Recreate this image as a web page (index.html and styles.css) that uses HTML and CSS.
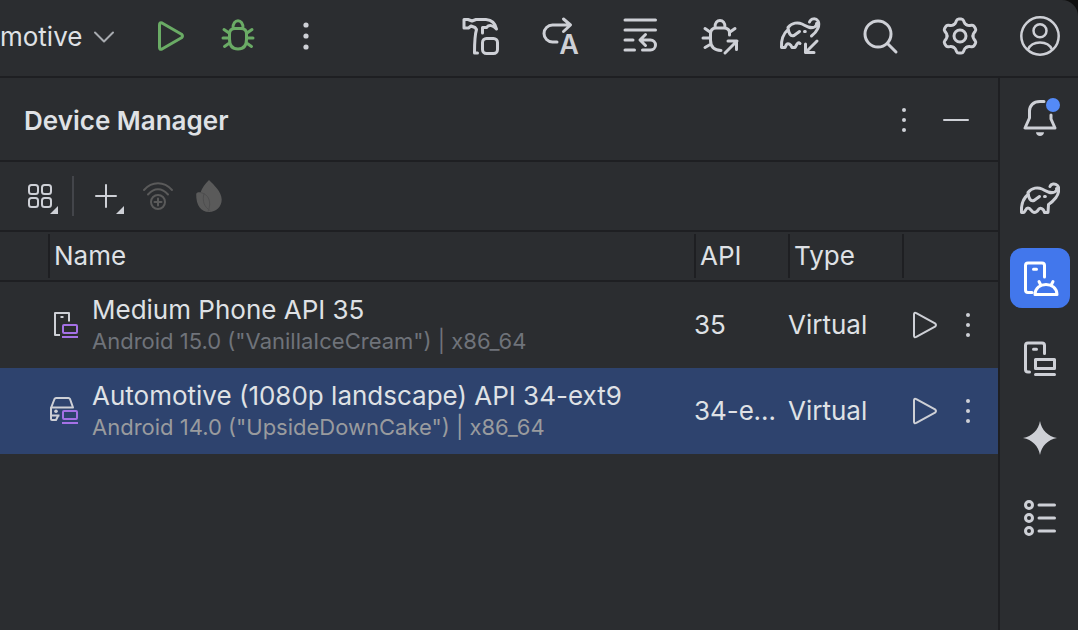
FILE: index.html
```html
<!DOCTYPE html>
<html lang="en">
<head>
<meta charset="utf-8">
<title>Device Manager</title>
<link rel="stylesheet" href="styles.css">
</head>
<body>
<svg class="defs" aria-hidden="true">
  <symbol id="kebab" viewBox="0 0 40 40"><g fill="currentColor"><circle cx="20" cy="10" r="2"/><circle cx="20" cy="20" r="2"/><circle cx="20" cy="30" r="2"/></g></symbol>
  <symbol id="elephant" viewBox="0 0 40 40">
    <path d="M30 8.500C31 5.500 35 5 37.500 7.500C40 10 38.500 16 36 19.500C34 22 31 25 28.500 26.500L28 34.500H24.500C23.500 30 20 29.500 18.500 31.500C17 34 15.500 34.500 14 34.500C11.500 34.500 11 30 8 30C5.500 30 5 34.500 3.500 34.500H1.500C1 27 3 20.500 8 16.500"/>
    <path d="M19.500 18.500L14 22.500C10.500 24 8.500 20 8 14.500C12 9.500 18 9 22 11C27 13.500 30 16 34.500 14C36.500 13 37 11.500 36.500 10.500"/>
    <path d="M24.500 18.500h.8"/>
  </symbol>
  <symbol id="play" viewBox="0 0 28 28"><path d="M4 3.500V24.500Q4 27 6.300 25.900L25 15.600Q27 14 25 12.400L6.300 2.100Q4 1 4 3.500Z"/></symbol>
</svg>
<div class="window">
  <header class="topbar">
    <button class="config" type="button">motive
      <svg class="icon chevron" viewBox="0 0 20 12"><path d="M1 1.500L10 10.500L19 1.500"/></svg>
    </button>
    <div class="group run-group">
      <button class="btn green" type="button" aria-label="Run"><svg class="icon" viewBox="0 0 40 40"><path d="M9.500 9V31.500Q9.500 34 12 33L31.500 21.800Q33.500 20 31.500 18.200L12 7Q9.500 6 9.500 9Z"/></svg></button>
      <button class="btn green" type="button" aria-label="Debug"><svg class="icon" viewBox="0 0 40 40"><path d="M15 12.500C14.500 2 25.500 2 25 12.500M17 12.500H23Q28.500 12.500 28.500 18V23Q28.500 33 20 33T11.500 23V18Q11.500 12.500 17 12.500ZM11 17L6 13.500M10.500 22H5M11.500 27L6.500 30.500M29 17L34 13.500M29.500 22H35M28.500 27L33.500 30.500"/></svg></button>
      <button class="btn" type="button" aria-label="More actions"><svg class="icon" viewBox="0 0 40 40"><g fill="currentColor" stroke="none"><circle cx="20" cy="9" r="2.600"/><circle cx="20" cy="20" r="2.600"/><circle cx="20" cy="31" r="2.600"/></g></svg></button>
    </div>
    <div class="group tools">
      <button class="btn" type="button" aria-label="Build"><svg class="icon" viewBox="0 0 40 40"><path d="M4 3.500H8L12 5L16 3.500H26C32 4 35.500 8 36.500 13C33 9 29 8.500 26.500 11.500H22.500V17M4 3.500V12H8.500L11 10L15 11.500L16.500 13.500C14.500 20 14.500 27 14.500 37H17.500"/><rect x="22.500" y="22.500" width="15" height="15" rx="4"/></svg></button>
      <button class="btn" type="button" aria-label="Apply changes"><svg class="icon" viewBox="0 0 40 40"><path d="M30 9H12.500A8.500 8.500 0 0 0 12.500 26H17M23.500 3L30.500 9L23.500 15.500"/><text class="icon-letter" x="29" y="38" text-anchor="middle">A</text></svg></button>
      <button class="btn" type="button" aria-label="Apply code changes"><svg class="icon" viewBox="0 0 40 40"><path d="M5 4H35.500M5 14H35.500M5 24H13M5 34H14.500M20.500 24H30.500A5 5 0 0 1 30.500 34H22.500M25.500 18.500L20 24L25.500 29.500"/></svg></button>
      <button class="btn" type="button" aria-label="Attach debugger"><svg class="icon" viewBox="0 0 40 40"><path d="M15 11.500C14.500 2 25.500 2 25 11.500M29.500 19V17Q29.500 12 24 12H16Q10.500 12 10.500 18V24Q10.500 34 21 34.500M10 16L5 12.500M10 22H3M11 28L5 31.500M30 16L35 12.500M25 37L37 25M28 25H36.500V33.500"/></svg></button>
      <button class="btn" type="button" aria-label="Sync project"><svg class="icon" viewBox="0 0 40 40"><path d="M29.500 6C31 2 36 2 38 5C40.500 9.500 37 16 31.500 20M20 27.500C18 25.500 16.500 29 15 31.500H12C11 28 8 27 6.500 28.500L5 31.500H1.500C1 24 3 18 8 13.500M19.500 15.500L14 19.500C10.500 21 8.500 17 8 11.500C12 6.500 18 6 22 8C27 10.500 30 13 34.500 11Q37 9.500 36.500 7.500M24.500 15.500h.8M37 25L25.500 36.500M25.500 28V36.500H34"/></svg></button>
      <button class="btn" type="button" aria-label="Search"><svg class="icon" viewBox="0 0 40 40"><circle cx="18" cy="18" r="13"/><path d="M27.500 27.500L36 36"/></svg></button>
      <button class="btn" type="button" aria-label="Settings"><svg class="icon" viewBox="0 0 40 40"><circle cx="20" cy="20" r="6"/><path id="tooth" d="M13.500 8.800Q15.200 7.800 15.800 6.200L16.500 4.500Q17.200 2.900 18.800 2.900H21.200Q22.800 2.900 23.500 4.500L24.200 6.200Q24.800 7.800 26.500 8.800"/><use href="#tooth" transform="rotate(60 20 20)"/><use href="#tooth" transform="rotate(120 20 20)"/><use href="#tooth" transform="rotate(180 20 20)"/><use href="#tooth" transform="rotate(240 20 20)"/><use href="#tooth" transform="rotate(300 20 20)"/></svg></button>
      <button class="btn" type="button" aria-label="Account"><svg class="icon medium" viewBox="0 0 40 40"><circle cx="20" cy="20" r="18.700"/><circle cx="20" cy="14.700" r="6.500"/><path d="M8 33.500C10 29 15 26.500 20 26.500S30 29 32 33.500"/></svg></button>
    </div>
  </header>
  <div class="body">
    <main class="panel">
      <div class="panel-head">
        <h1 class="title">Device Manager</h1>
        <button class="btn" type="button" aria-label="Options"><svg class="icon"><use href="#kebab" stroke="none"/></svg></button>
        <button class="btn" type="button" aria-label="Hide"><svg class="icon thin" viewBox="0 0 40 40"><path d="M8 20H32"/></svg></button>
      </div>
      <div class="panel-tools">
        <button class="btn" type="button" aria-label="Group by"><svg class="icon thin" viewBox="0 0 40 40"><rect x="9" y="9" width="9" height="9" rx="2.500"/><rect x="22" y="9" width="9" height="9" rx="2.500"/><rect x="9" y="22" width="9" height="9" rx="2.500"/><rect x="22" y="22" width="9" height="9" rx="2.500"/><path d="M38 30V38H30Z" fill="currentColor" stroke="none"/></svg></button>
        <span class="divider"></span>
        <button class="btn" type="button" aria-label="Add device"><svg class="icon thin" viewBox="0 0 40 40"><path d="M20 9V31M10 20H30"/><path d="M38 30V38H30Z" fill="currentColor" stroke="none"/></svg></button>
        <button class="btn off" type="button" aria-label="Pair over Wi-Fi" disabled><svg class="icon thin" viewBox="0 0 40 40"><path d="M6 14C14 5 26 5 34 14M10 18.500C16 11.500 24 11.500 30 18.500M20 22.500V29.500M16.500 26H23.500"/><circle cx="20" cy="26" r="7"/></svg></button>
        <button class="btn off" type="button" aria-label="Firebase" disabled><svg class="icon" viewBox="0 0 40 40"><path d="M19 4C24 9 31.700 16 31.700 23.500C31.700 31 26 36 19 36C11 36 6 29.500 6.200 18C6.500 16.500 8.500 16 10.500 16.500C12 12 15 8 19 4Z" fill="currentColor" stroke="none"/><path class="vein" d="M10.500 16.500C19 18 22 26 18 35.500M14 17.500C12 25 14 31 20 34.500"/></svg></button>
      </div>
      <table class="devices">
        <colgroup><col class="c-lead"><col><col class="c-api"><col class="c-type"><col class="c-act"></colgroup>
        <thead>
          <tr><td></td><th scope="col"><span>Name</span></th><th scope="col"><span>API</span></th><th scope="col"><span>Type</span></th><td><span class="blank"></span></td></tr>
        </thead>
        <tbody>
          <tr>
            <td></td>
            <td><div class="device"><svg class="icon device-icon" viewBox="0 0 28 28"><path d="M10 24H5V2H19V10.500M10.500 6H13.500"/><g class="virtual"><rect x="13" y="14" width="14" height="8" rx="1"/><path d="M12 26H28"/></g></svg>
              <div class="info"><div class="name">Medium Phone API 35</div><div class="sub">Android 15.0 ("VanillaIceCream") | x86_64</div></div></div></td>
            <td class="clip">35</td><td>Virtual</td>
            <td><div class="actions"><button class="btn" type="button" aria-label="Start"><svg class="icon play"><use href="#play"/></svg></button><button class="btn" type="button" aria-label="Device actions"><svg class="icon"><use href="#kebab" stroke="none"/></svg></button></div></td>
          </tr>
          <tr class="selected">
            <td></td>
            <td><div class="device"><svg class="icon device-icon" viewBox="0 0 28 28"><path d="M1 11L4.500 2Q5 1 6 1H18.500Q19.500 1 20 2L23 10.500H1V22Q1 23 2 23H6L8 19M1.500 18.500H9.500"/><circle cx="6" cy="14.300" r="1.800" fill="currentColor" stroke="none"/><g class="virtual"><rect x="13" y="14" width="14" height="8" rx="1"/><path d="M12 26H28"/></g></svg>
              <div class="info"><div class="name">Automotive (1080p landscape) API 34-ext9</div><div class="sub">Android 14.0 ("UpsideDownCake") | x86_64</div></div></div></td>
            <td class="clip">34-ext9</td><td>Virtual</td>
            <td><div class="actions"><button class="btn" type="button" aria-label="Start"><svg class="icon play"><use href="#play"/></svg></button><button class="btn" type="button" aria-label="Device actions"><svg class="icon"><use href="#kebab" stroke="none"/></svg></button></div></td>
          </tr>
        </tbody>
      </table>
    </main>
    <nav class="rail">
      <button class="tab" type="button" aria-label="Notifications"><svg class="icon" viewBox="0 0 40 40"><path d="M24 3.500H20C13 3.500 9.500 8 9.500 13V20L5 30H35L31 21V17"/><path d="M16 34.300H24C24 36.500 22 38 20 38S16 36.500 16 34.300Z" fill="currentColor" stroke="none"/><circle class="badge" cx="33" cy="7" r="7"/></svg></button>
      <button class="tab" type="button" aria-label="Gradle"><svg class="icon"><use href="#elephant"/></svg></button>
      <button class="tab active" type="button" aria-label="Device Manager"><svg class="icon" viewBox="0 0 40 40"><path d="M12 34.500H8Q5.500 34.500 5.500 32V7.500Q5.500 5 8 5H22Q24.500 5 24.500 7.500V19M13.500 11.300H16.500M15 36.500C15.500 23 36.500 23 37 36.500ZM19 23.500L21 27.500M33 23.500L31 27.500"/></svg></button>
      <button class="tab" type="button" aria-label="Running Devices"><svg class="icon" viewBox="0 0 40 40"><path d="M9.500 34H8Q5.500 34 5.500 31.500V7.500Q5.500 5 8 5H22Q24.500 5 24.500 7.500V15.500M13.500 11.300H16.500M15.500 36.500H34.500"/><rect x="15.500" y="21.500" width="19" height="9"/></svg></button>
      <button class="tab" type="button" aria-label="Gemini"><svg class="icon" viewBox="0 0 40 40"><path d="M20 3C21.500 12 28 18.500 37 20C28 21.500 21.500 28 20 37C18.500 28 12 21.500 3 20C12 18.500 18.500 12 20 3Z" fill="currentColor" stroke="none"/></svg></button>
      <button class="tab" type="button" aria-label="Logs"><svg class="icon" viewBox="0 0 40 40"><circle cx="9" cy="7" r="3.500"/><circle cx="9" cy="20" r="3.500"/><circle cx="9" cy="33" r="3.500"/><path d="M19 7H34.500M19 20H34.500M19 33H34.500"/></svg></button>
    </nav>
  </div>
</div>
</body>
</html>
```
FILE: styles.css
```css
:root {
  --bg: #2b2d30;
  --line: #1e1f22;
  --text: #dfe1e5;
  --icon: #ced0d6;
}
* { box-sizing: border-box; }
body {
  margin: 0;
  background: #101010;
  color: var(--text);
  font-family: Inter, "Liberation Sans", sans-serif;
  font-size: 26px;
  line-height: 32px;
}
button {
  margin: 0;
  padding: 0;
  border: 0;
  background: none;
  color: var(--icon);
  font: inherit;
}
.defs { position: absolute; width: 0; height: 0; }
.window {
  display: flex;
  flex-direction: column;
  min-height: 100vh;
  background: var(--bg);
  border-top-right-radius: 16px;
}
.icon {
  display: block;
  flex: none;
  width: 40px;
  height: 40px;
  overflow: visible;
  fill: none;
  stroke: currentColor;
  stroke-width: 3px;
  stroke-linejoin: round;
  stroke-linecap: round;
}
.thin { stroke-width: 2px; }
.medium { stroke-width: 2.5px; }
.btn { display: flex; flex: none; }
.green { color: #6aab65; }
.off { color: #5a5a5a; }
.icon-letter {
  font-size: 27px;
  line-height: 27px;
  font-weight: 600;
  fill: currentColor;
  stroke: none;
}

.topbar {
  display: flex;
  align-items: center;
  padding: 0 18px 4px 0;
  height: 78px;
  border-bottom: 2px solid var(--line);
}
.config {
  display: flex;
  align-items: center;
  gap: 12px;
  padding-top: 2px;
  color: var(--text);
}
.chevron {
  width: 20px;
  height: 12px;
  stroke-width: 2px;
  color: #a8abb0;
}
.group { display: flex; }
.run-group { gap: 28px; margin-left: 36px; }
.tools { gap: 40px; margin-left: auto; }

.body { display: flex; flex: 1; }
.panel { flex: 1; min-width: 0; border-right: 2px solid var(--line); }
.panel-head {
  display: flex;
  align-items: center;
  gap: 12px;
  height: 84px;
  padding: 2px 22px 0 24px;
  border-bottom: 2px solid var(--line);
}
.title {
  flex: 1;
  margin: 0;
  padding-top: 2px;
  font-size: 26px;
  font-weight: 600;
}
.panel-tools {
  display: flex;
  align-items: center;
  gap: 12px;
  height: 70px;
  padding-left: 20px;
  border-bottom: 2px solid var(--line);
}
.divider { width: 2px; height: 40px; background: #43454a; }
.vein { stroke: #4e4e4f; stroke-width: 1px; }

.devices {
  width: 100%;
  table-layout: fixed;
  border-collapse: separate;
  border-spacing: 0;
}
.devices td, .devices th { padding: 0; font-weight: 400; text-align: left; }
.devices thead td, .devices thead th { height: 50px; border-bottom: 2px solid var(--line); }
.devices th span, .blank {
  display: block;
  height: 44px;
  padding-left: 4px;
  border-left: 2px solid var(--line);
  line-height: 44px;
}
.devices tbody tr { height: 86px; }
.selected { background: #2e436e; }
.c-lead { width: 48px; }
.c-api { width: 94px; }
.c-type { width: 114px; }
.c-act { width: 96px; }
.device { display: flex; align-items: center; gap: 14px; padding-left: 2px; }
.device-icon { width: 28px; height: 28px; stroke-width: 2px; stroke-linecap: butt; color: var(--icon); }
.virtual { stroke: #a571e6; }
.info { min-width: 0; white-space: nowrap; }
.sub { font-size: 22px; line-height: 30px; color: #6f737a; }
.selected .sub { color: #999b9e; }
.devices .clip {
  padding-right: 12px;
  overflow: hidden;
  text-overflow: ellipsis;
  white-space: nowrap;
}
.actions { display: flex; align-items: center; gap: 10px; padding-left: 8px; }
.play { width: 28px; height: 28px; stroke-width: 2px; }

.rail {
  display: flex;
  flex-direction: column;
  align-items: center;
  gap: 20px;
  width: 78px;
  padding: 10px 8px 10px 10px;
}
.tab {
  display: grid;
  place-items: center;
  width: 60px;
  height: 60px;
  border-radius: 12px;
}
.active { background: #4277ec; color: #fff; }
.badge { fill: #548af7; stroke: none; }
```
